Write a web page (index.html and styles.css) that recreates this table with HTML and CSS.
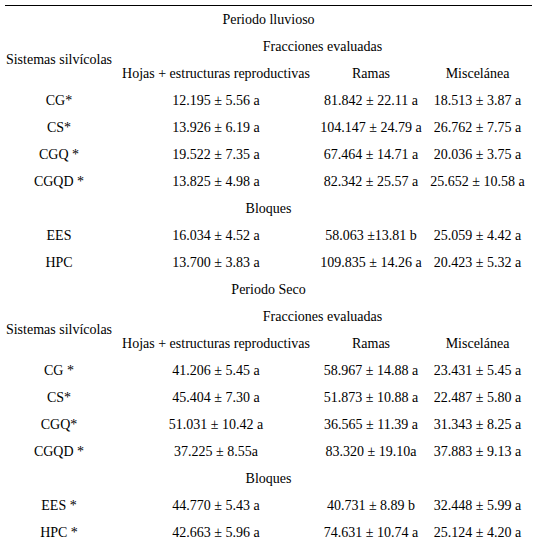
FILE: index.html
```html
<!DOCTYPE html>
<html lang="es">
<head>
<meta charset="utf-8">
<link rel="stylesheet" href="styles.css">
</head>
<body>
<div class="page">
  <div class="tbl">
    <div class="c full">Periodo lluvioso</div>
    <div class="c rowhead">Sistemas silvícolas</div>
    <div class="c span3">Fracciones evaluadas</div>
    <div class="c">Hojas + estructuras reproductivas</div>
    <div class="c">Ramas</div>
    <div class="c">Miscelánea</div>

    <div class="c">CG*</div><div class="c">12.195 ± 5.56 a</div><div class="c">81.842 ± 22.11 a</div><div class="c">18.513 ± 3.87 a</div>
    <div class="c">CS*</div><div class="c">13.926 ± 6.19 a</div><div class="c">104.147 ± 24.79 a</div><div class="c">26.762 ± 7.75 a</div>
    <div class="c">CGQ *</div><div class="c">19.522 ± 7.35 a</div><div class="c">67.464 ± 14.71 a</div><div class="c">20.036 ± 3.75 a</div>
    <div class="c">CGQD *</div><div class="c">13.825 ± 4.98 a</div><div class="c">82.342 ± 25.57 a</div><div class="c">25.652 ± 10.58 a</div>
    <div class="c full">Bloques</div>
    <div class="c">EES</div><div class="c">16.034 ± 4.52 a</div><div class="c">58.063 ±13.81 b</div><div class="c">25.059 ± 4.42 a</div>
    <div class="c">HPC</div><div class="c">13.700 ± 3.83 a</div><div class="c">109.835 ± 14.26 a</div><div class="c">20.423 ± 5.32 a</div>

    <div class="c full">Periodo Seco</div>
    <div class="c rowhead">Sistemas silvícolas</div>
    <div class="c span3">Fracciones evaluadas</div>
    <div class="c">Hojas + estructuras reproductivas</div>
    <div class="c">Ramas</div>
    <div class="c">Miscelánea</div>

    <div class="c">CG *</div><div class="c">41.206 ± 5.45 a</div><div class="c">58.967 ± 14.88 a</div><div class="c">23.431 ± 5.45 a</div>
    <div class="c">CS*</div><div class="c">45.404 ± 7.30 a</div><div class="c">51.873 ± 10.88 a</div><div class="c">22.487 ± 5.80 a</div>
    <div class="c">CGQ*</div><div class="c">51.031 ± 10.42 a</div><div class="c">36.565 ± 11.39 a</div><div class="c">31.343 ± 8.25 a</div>
    <div class="c">CGQD *</div><div class="c">37.225 ± 8.55a</div><div class="c">83.320 ± 19.10a</div><div class="c">37.883 ± 9.13 a</div>
    <div class="c full">Bloques</div>
    <div class="c">EES *</div><div class="c">44.770 ± 5.43 a</div><div class="c">40.731 ± 8.89 b</div><div class="c">32.448 ± 5.99 a</div>
    <div class="c">HPC *</div><div class="c">42.663 ± 5.96 a</div><div class="c">74.631 ± 10.74 a</div><div class="c">25.124 ± 4.20 a</div>
  </div>
</div>
</body>
</html>
```

FILE: styles.css
```css
html, body {
  margin: 0;
  padding: 0;
  background: #fff;
}
.page {
  padding: 5px 5px 0 5px;
}
.tbl {
  width: 527px;
  border-top: 1px solid #000;
  display: grid;
  grid-template-columns: 108px 206px 104px 109px;
  grid-auto-rows: 27px;
  font-family: "Liberation Serif", "Times New Roman", serif;
  font-size: 14px;
  color: #000;
}
.c {
  display: flex;
  align-items: center;
  justify-content: center;
  white-space: nowrap;
}
.full {
  grid-column: 1 / 5;
}
.rowhead {
  grid-row: span 2;
}
.span3 {
  grid-column: 2 / 5;
}
```
